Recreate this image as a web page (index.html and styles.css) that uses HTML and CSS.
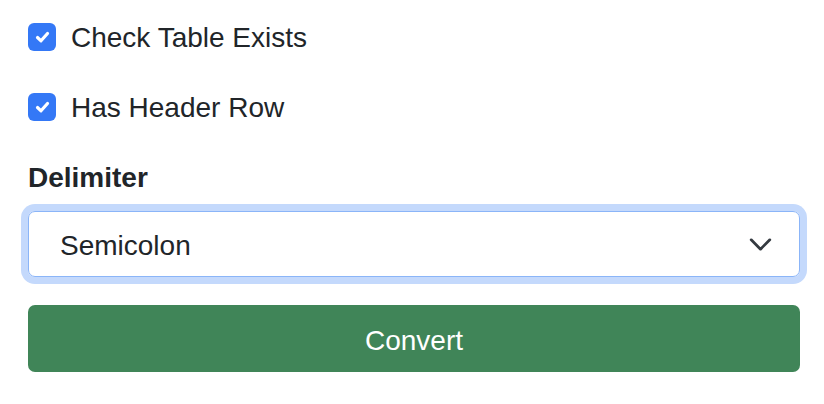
FILE: index.html
```html
<!DOCTYPE html>
<html lang="en">
  <head>
    <meta charset="UTF-8" />
    <meta name="viewport" content="width=device-width, initial-scale=1.0" />
    <title>Convert</title>
    <link rel="stylesheet" href="styles.css">
  </head>
  <body>
    <div class="form">
      <label class="check-row">
        <span class="check-box">
          <svg viewBox="0 0 28 28" width="28" height="28">
            <path d="M9.5 14.5l3.5 3.3 6.5-7.3" fill="none" stroke="#fff" stroke-width="3.2" stroke-linecap="round" stroke-linejoin="round"/>
          </svg>
        </span>
        <span>Check Table Exists</span>
      </label>

      <label class="check-row">
        <span class="check-box">
          <svg viewBox="0 0 28 28" width="28" height="28">
            <path d="M9.5 14.5l3.5 3.3 6.5-7.3" fill="none" stroke="#fff" stroke-width="3.2" stroke-linecap="round" stroke-linejoin="round"/>
          </svg>
        </span>
        <span>Has Header Row</span>
      </label>

      <div class="field">
        <div class="field-label">Delimiter</div>
        <div class="select">
          <span>Semicolon</span>
          <svg viewBox="0 0 24 14" width="23" height="13">
            <path d="M2 2l10 10L22 2" fill="none" stroke="#343a40" stroke-width="3" stroke-linecap="round" stroke-linejoin="round"/>
          </svg>
        </div>
      </div>

      <button class="btn-convert">Convert</button>
    </div>
  </body>
</html>
```

FILE: styles.css
```css
body {
  margin: 0;
  font-family: "Liberation Sans", Arial, sans-serif;
  font-size: 28px;
  line-height: 42px;
  color: #212529;
  background: #fff;
}

.form {
  display: flex;
  flex-direction: column;
  padding: 16px 24px 0 28px;
}

.check-row {
  display: flex;
  align-items: flex-start;
  gap: 15px;
  height: 42px;
  margin-bottom: 28px;
}

.check-row span:last-child {
  padding-top: 1px;
}

.check-box {
  width: 28px;
  height: 28px;
  margin-top: 7px;
  border-radius: 6px;
  background: #3478f6;
  display: flex;
}

.field {
  display: flex;
  flex-direction: column;
  margin-bottom: 28px;
}

.field-label {
  font-weight: bold;
  margin-bottom: 12px;
  padding-top: 1px;
}

.select {
  box-sizing: border-box;
  height: 66px;
  border: 1px solid #8bb5f8;
  border-radius: 7px;
  box-shadow: 0 0 0 7px #c4d9fc;
  padding: 4px 27px 0 31px;
  display: flex;
  align-items: center;
  justify-content: space-between;
}

.select svg {
  margin-top: -4px;
}

.btn-convert {
  height: 67px;
  border: none;
  border-radius: 7px;
  background: #408558;
  color: #fff;
  font-family: inherit;
  font-size: 28px;
  padding-top: 5px;
  cursor: pointer;
}
```
